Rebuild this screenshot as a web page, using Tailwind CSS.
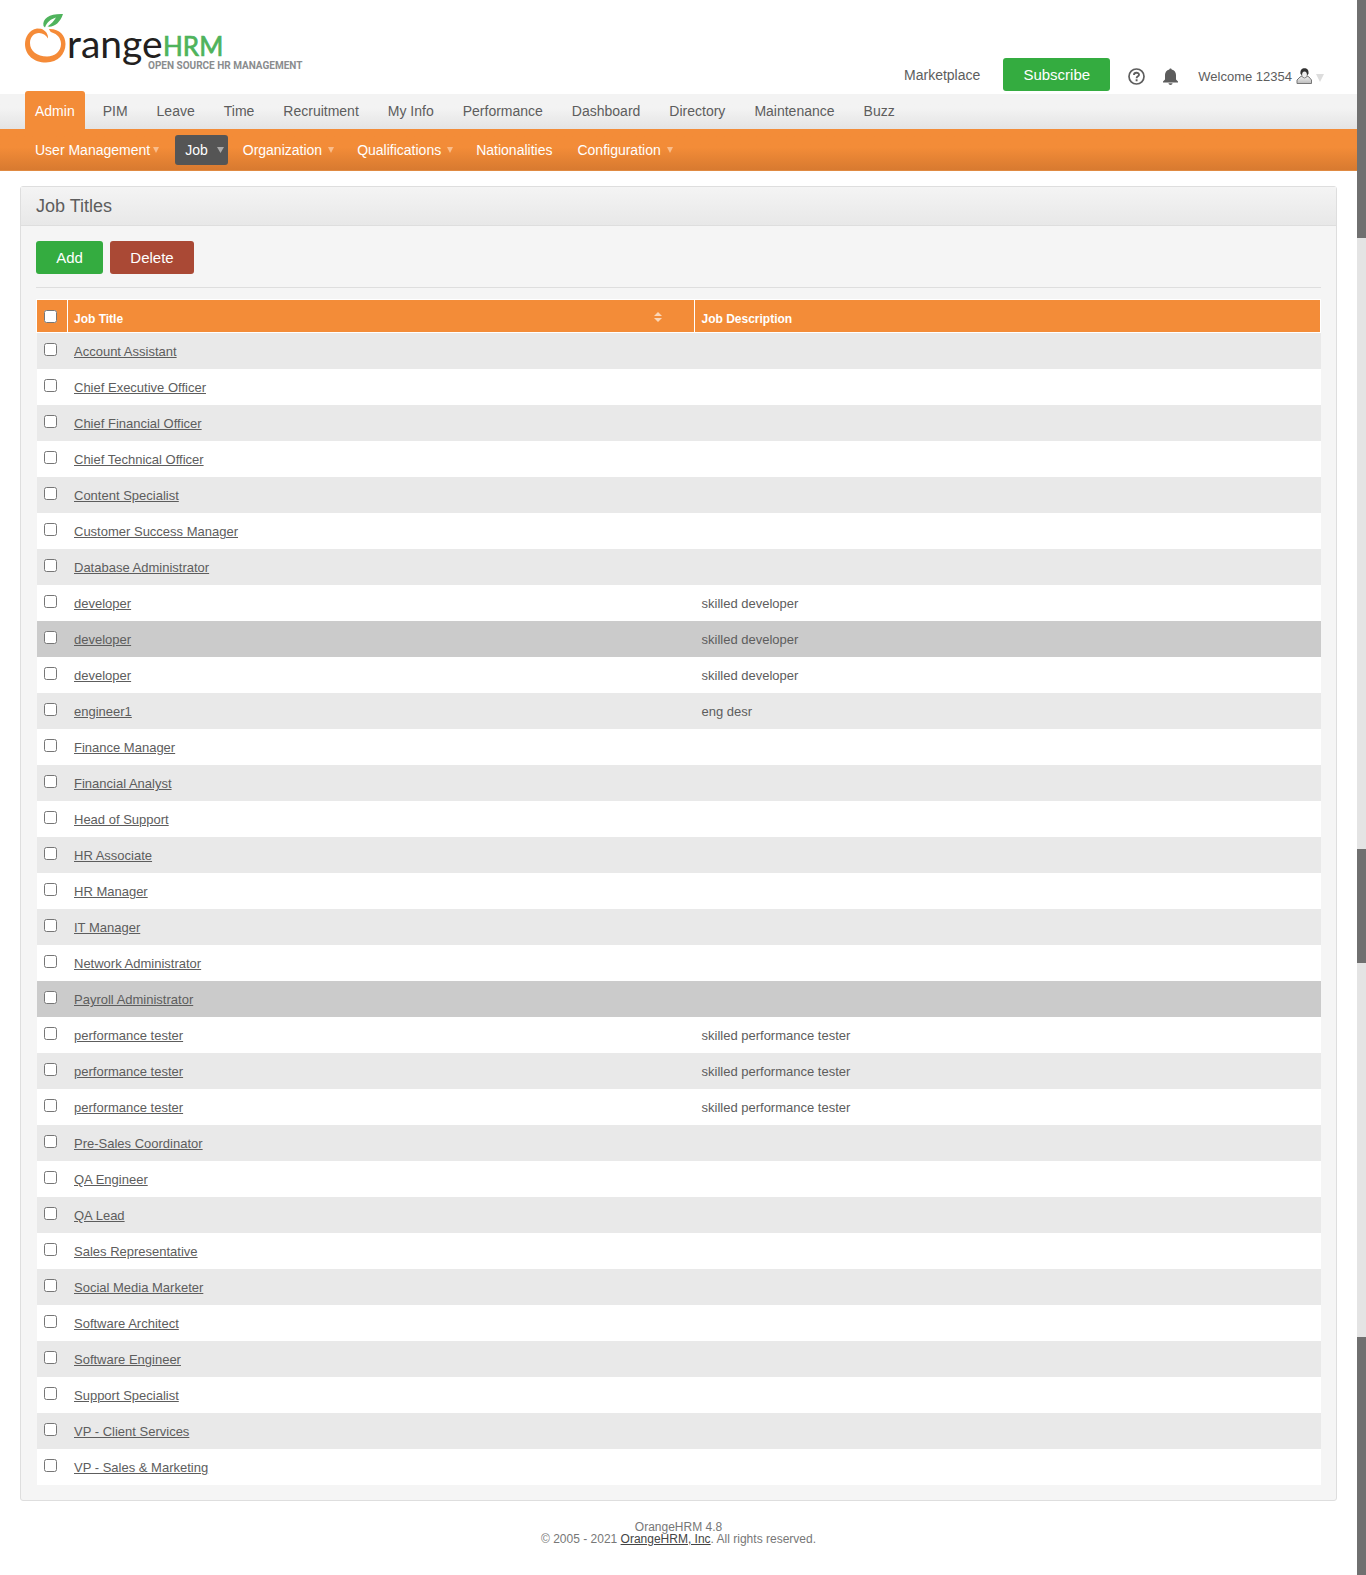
<!DOCTYPE html>
<html lang="en">
<head>
<meta charset="utf-8">
<title>OrangeHRM</title>
<script src="https://cdn.jsdelivr.net/npm/@tailwindcss/browser@4"></script>
</head>
<body class="flex min-h-screen bg-white font-['Liberation_Sans',Arial,sans-serif] text-[#5d5d5d]">
<div class="min-w-0 flex-1">
  <header class="flex h-[94px] justify-between pl-[25px] pr-[33px]">
    <a href="#" class="mt-3 block h-[60px] w-[280px] shrink-0" aria-label="OrangeHRM">
      <svg class="block" width="280" height="60" viewBox="25 12 280 60">
        <path fill="#f58b38" fill-rule="evenodd" d="M37 28.500C29 30 25 37 25 44C25 55 34 62.500 46 62.500C58 62.500 65.500 54 65.500 44C65.500 35 59 28.500 49 29C49.500 30.500 50.500 32 52 32.500C57 34 61 38 61 44C61 51 55 56.500 47 56.500C37 56.500 30 51 30 43C30 37 34 33 39 33C43 33.300 46 35 48 38.500C48.500 34 45 30 41 28.800Z"/>
        <path fill="#4fb35c" d="M43.500 26C42 18 50 13.500 63 14C60 23 54 27.500 47.500 26.500C51 24 54 21 56 17.500C51 19 47 22 45 27.500Z"/>
        <text x="67" y="58" font-family="Lato, sans-serif" font-size="39" fill="#231f20">range</text>
        <text x="163" y="56" font-family="Lato, sans-serif" font-size="26" fill="#4fb35c" stroke="#4fb35c" stroke-width=".7">HRM</text>
        <text x="148" y="69" font-family="Roboto, sans-serif" font-weight="bold" font-size="10" fill="#8a8c8e">OPEN SOURCE HR MANAGEMENT</text>
      </svg>
    </a>
    <div class="mt-[58px] flex h-[33px] items-center">
      <a href="#" class="mr-[23px] text-sm">Marketplace</a>
      <button class="mr-[18px] h-[33px] w-[107px] rounded-[3px] bg-[#34ac40] pt-px text-[15px] text-white">Subscribe</button>
      <button class="mr-[18px] mt-1" aria-label="Help">
        <svg class="block" width="17" height="17" viewBox="0 0 17 17" fill="none" stroke="#5d5d5d"><circle cx="8.500" cy="8.500" r="7.500" stroke-width="1.700"/><path stroke-width="1.900" d="M6 7c0-3 5-3 5-.3 0 1.700-2.400 1.600-2.400 3.600M8.600 11.300v2"/></svg>
      </button>
      <button class="mr-5 mt-1" aria-label="Notifications">
        <svg class="block" width="15" height="17" viewBox="0 0 15 17" fill="#5d5d5d"><path d="M6.300 1.500C6.300 0 8.700 0 8.700 1.500C11.500 2 13 4.500 13 7V11.500L15 13.500V14.500H0V13.500L2 11.500V7C2 4.500 3.500 2 6.300 1.500ZM5.500 15.200H9.500C9.500 17.500 5.500 17.500 5.500 15.200Z"/></svg>
      </button>
      <button class="mt-1 flex items-center text-[13px]">Welcome 12354
        <svg class="ml-1" width="17" height="17" viewBox="0 0 17 17"><defs><linearGradient id="coat" x2="0" y2="1"><stop stop-color="#f4f4f4"/><stop offset="1" stop-color="#bbb"/></linearGradient></defs><path d="M4 9L6 8H11L13 9L15.500 12V15.500H1V12Z" fill="url(#coat)" stroke="#777"/><ellipse cx="8.500" cy="6" rx="3" ry="4" fill="#eee" stroke="#888"/><path d="M4.500 6C4 1.500 6 .2 8.500 .2C11 .2 13 1.500 12.500 6L11 7C11 4.500 10 3.500 8.500 3.500C7 3.500 6 4.500 6 7Z" fill="#333"/></svg>
        <svg class="ml-[3px] mt-[3px]" width="8" height="8" viewBox="0 0 8 8"><path d="M0 0H8L4 8Z" fill="#ddd"/></svg>
      </button>
    </div>
  </header>

  <nav class="flex h-[35px] items-end bg-linear-to-b from-[#f3f3f3] from-40% to-[#e4e4e4] pl-[25px] text-sm">
    <a href="#" class="mr-2 h-[38px] rounded-t-[3px] bg-[#f38c38] px-[10px] leading-[40px] text-white">Admin</a>
    <div class="flex gap-[29px] pl-[10px] leading-[35px]">
      <a href="#">PIM</a><a href="#">Leave</a><a href="#">Time</a><a href="#">Recruitment</a><a href="#">My Info</a><a href="#">Performance</a><a href="#">Dashboard</a><a href="#">Directory</a><a href="#">Maintenance</a><a href="#">Buzz</a>
    </div>
  </nav>
  <nav class="flex h-[42px] items-center border-b border-[#e08a42] bg-linear-to-b from-[#f38c38] from-45% to-[#d87a30] pl-[35px] text-sm text-white">
    <a href="#" class="mr-4 flex items-center gap-[3px]">User Management<svg width="6" height="6" viewBox="0 0 6 6"><path d="M0 0H6L3 6Z" fill="#fabd8b"/></svg></a>
    <a href="#" class="mr-[15px] flex h-[30px] items-center gap-[9px] rounded-[3px] bg-[#555] pl-[10px] pr-1">Job<svg width="7" height="6" viewBox="0 0 7 6"><path d="M0 0H7L3.500 6Z" fill="#aaa"/></svg></a>
    <a href="#" class="mr-[23px] flex items-center gap-[6px]">Organization<svg width="6" height="6" viewBox="0 0 6 6"><path d="M0 0H6L3 6Z" fill="#fabd8b"/></svg></a>
    <a href="#" class="mr-[23px] flex items-center gap-[6px]">Qualifications<svg width="6" height="6" viewBox="0 0 6 6"><path d="M0 0H6L3 6Z" fill="#fabd8b"/></svg></a>
    <a href="#" class="mr-[25px]">Nationalities</a>
    <a href="#" class="flex items-center gap-[6px]">Configuration<svg width="6" height="6" viewBox="0 0 6 6"><path d="M0 0H6L3 6Z" fill="#fabd8b"/></svg></a>
  </nav>

  <main class="mx-5 mt-[15px] rounded-[3px] border border-[#dedede] bg-[#f5f5f5]">
    <h1 class="h-[39px] border-b border-[#dedede] bg-linear-to-b from-[#f4f4f4] to-[#e8e8e8] px-[15px] text-lg leading-[38px]">Job Titles</h1>
    <div class="p-[15px]">
      <div class="flex gap-[7px] border-b border-[#dedede] pb-[13px] text-[15px] text-white">
        <button class="h-[33px] w-[67px] rounded-[3px] bg-[#34ac40] pt-px">Add</button>
        <button class="h-[33px] w-[84px] rounded-[3px] bg-[#aa4935] pt-px">Delete</button>
      </div>
      <table class="mt-[11px] w-full table-fixed border-separate border-spacing-0 text-left text-[13px]">
        <colgroup><col class="w-8"><col><col></colgroup>
        <thead>
          <tr class="h-[34px] bg-[#f38c38] text-xs text-white">
            <th class="border border-white pl-[7px]"><input type="checkbox" aria-label="Select all" class="block size-[13px]"></th>
            <th class="border-y border-r border-white pl-[6px] pr-8 pt-[5px] font-bold"><span class="flex items-center justify-between">Job Title<svg class="mb-1" width="8" height="10" viewBox="0 0 8 10"><path d="M0 4H8L4 0ZM0 6H8L4 10Z" fill="#fbd7b8"/></svg></span></th>
            <th class="border-y border-r border-white pl-[7px] pt-[5px] font-bold">Job Description</th>
          </tr>
        </thead>
        <tbody id="titles"></tbody>
      </table>
    </div>
  </main>
  <footer class="mt-5 pb-7 text-center text-xs leading-3 text-[#777]">OrangeHRM 4.8<br>© 2005 - 2021 <a href="#" class="text-[#444] underline">OrangeHRM, Inc</a>. All rights reserved.</footer>
</div>
<div class="flex w-[9px] shrink-0 flex-col justify-between bg-[#e4e4e4]" aria-hidden="true">
  <div class="h-[238px] bg-[#707070]"></div>
  <div class="mt-[237px] h-[114px] bg-[#707070]"></div>
  <div class="h-[238px] bg-[#707070]"></div>
</div>
<script>
const rows = ["Account Assistant","Chief Executive Officer","Chief Financial Officer","Chief Technical Officer","Content Specialist","Customer Success Manager","Database Administrator",["developer","skilled developer"],["developer","skilled developer",1],["developer","skilled developer"],["engineer1","eng desr"],"Finance Manager","Financial Analyst","Head of Support","HR Associate","HR Manager","IT Manager","Network Administrator",["Payroll Administrator","",1],["performance tester","skilled performance tester"],["performance tester","skilled performance tester"],["performance tester","skilled performance tester"],"Pre-Sales Coordinator","QA Engineer","QA Lead","Sales Representative","Social Media Marketer","Software Architect","Software Engineer","Support Specialist","VP - Client Services","VP - Sales & Marketing"];
document.getElementById("titles").innerHTML = rows.map((r, i) => {
  const [title, desc = "", marked] = [].concat(r);
  const name = title.replace("&", "&amp;");
  const bg = marked ? "bg-[#cbcbcb]" : i % 2 ? "bg-white" : "bg-[#e9e9e9]";
  return `<tr class="h-9 ${bg}"><td class="border-l border-[#f5f5f5] pl-[7px] pb-[3px]"><input type="checkbox" aria-label="Select ${name}" class="block size-[13px]"></td><td class="pl-[6px] pt-[2px]"><a href="#" class="underline">${name}</a></td><td class="pl-[7px] pt-[2px]">${desc}</td></tr>`;
}).join("");
</script>
</body>
</html>
